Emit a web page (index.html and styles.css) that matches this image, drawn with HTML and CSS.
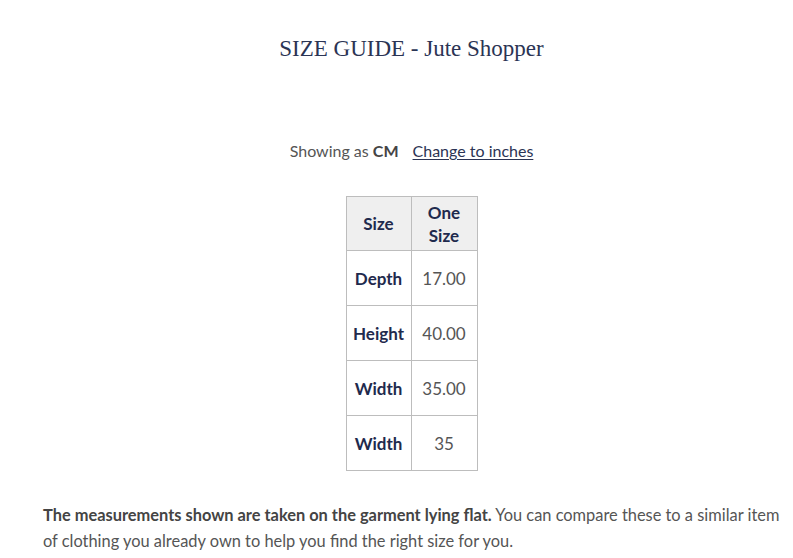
FILE: index.html
```html
<!DOCTYPE html>
<html>
<head>
<meta charset="utf-8">
<link rel="stylesheet" href="styles.css">
</head>
<body>
<div class="page">
  <h1 class="title">SIZE GUIDE - Jute Shopper</h1>
  <p class="units">Showing as <b>CM</b><a class="switch" href="#">Change to inches</a></p>
  <div class="table-wrap">
    <table class="sizes">
      <tr><th class="head">Size</th><th class="head">One Size</th></tr>
      <tr><th>Depth</th><td>17.00</td></tr>
      <tr><th>Height</th><td>40.00</td></tr>
      <tr><th>Width</th><td>35.00</td></tr>
      <tr><th>Width</th><td>35</td></tr>
    </table>
  </div>
  <p class="note"><b>The measurements shown are taken on the garment lying flat.</b> You can compare these to a similar item of clothing you already own to help you find the right size for you.</p>
</div>
</body>
</html>
```
FILE: styles.css
```css
html, body { margin: 0; padding: 0; background: #fff; }
.page {
  padding: 0 13px 0 43px;
  font-family: Lato, "Open Sans", sans-serif;
  color: #555;
  font-size: 16px;
}
.title {
  margin: 0;
  padding-top: 34px;
  text-align: center;
  font-family: "Liberation Serif", "DejaVu Serif", serif;
  font-weight: normal;
  font-size: 23px;
  line-height: 30px;
  color: #2b3454;
}
.units {
  margin: 76px 0 0;
  text-align: center;
  line-height: 22px;
  color: #555;
}
.units b { color: #444; }
.switch {
  margin-left: 14px;
  color: #2b3454;
  text-decoration: underline;
  text-underline-offset: 2px;
}
.table-wrap { display: flex; justify-content: center; margin-top: 34px; }
.sizes {
  border-collapse: collapse;
  text-align: center;
}
.sizes th, .sizes td {
  border: 1px solid #bdbdbd;
  padding: 0 5px;
  height: 54px;
  line-height: 23px;
  font-size: 17px;
}
.sizes th { color: #1f2a4d; font-weight: bold; width: 54px; }
.sizes td { color: #555; width: 55px; }
.sizes th.head { background: #efefef; height: 53px; }
.note {
  margin: 31px 0 0;
  line-height: 26px;
  font-size: 16.4px;
  color: #555;
}
.note b { color: #444; }
```
